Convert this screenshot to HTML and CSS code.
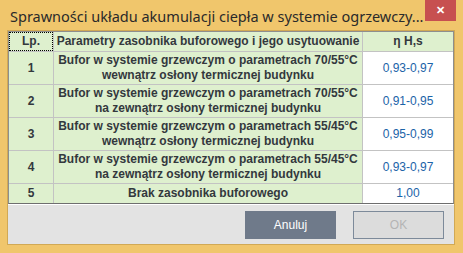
FILE: index.html
```html
<!DOCTYPE html>
<html>
<head>
    <title>Sprawności układu akumulacji ciepła</title>
    <meta charset="utf-8">
    <link rel="stylesheet" href="styles.css">
</head>
<body>
    <div class="window">
        <div class="titlebar">
            <span class="title">Sprawności układu akumulacji ciepła w systemie ogrzewczy...</span>
            <button class="close-btn" type="button">&#x2715;</button>
        </div>
        <div class="content">
            <div class="grid">
                <div class="cell head focus">Lp.</div>
                <div class="cell head">Parametry zasobnika buforowego i jego usytuowanie</div>
                <div class="cell head">η H,s</div>

                <div class="cell">1</div>
                <div class="cell">Bufor w systemie grzewczym o parametrach 70/55°C<br>wewnątrz osłony termicznej budynku</div>
                <div class="cell value">0,93-0,97</div>

                <div class="cell">2</div>
                <div class="cell">Bufor w systemie grzewczym o parametrach 70/55°C<br>na zewnątrz osłony termicznej budynku</div>
                <div class="cell value">0,91-0,95</div>

                <div class="cell">3</div>
                <div class="cell">Bufor w systemie grzewczym o parametrach 55/45°C<br>wewnątrz osłony termicznej budynku</div>
                <div class="cell value">0,95-0,99</div>

                <div class="cell">4</div>
                <div class="cell">Bufor w systemie grzewczym o parametrach 55/45°C<br>na zewnątrz osłony termicznej budynku</div>
                <div class="cell value">0,93-0,97</div>

                <div class="cell">5</div>
                <div class="cell">Brak zasobnika buforowego</div>
                <div class="cell value">1,00</div>
            </div>
            <div class="footer">
                <button class="btn btn-cancel" type="button">Anuluj</button>
                <button class="btn btn-ok" type="button" disabled>OK</button>
            </div>
        </div>
    </div>
</body>
</html>
```

FILE: styles.css
```css
body {
    margin: 0;
    font-family: "Liberation Sans", Arial, sans-serif;
}
.window {
    width: 463px;
    height: 253px;
    background: #f0c66c;
    box-sizing: border-box;
    display: flex;
    flex-direction: column;
}
.titlebar {
    height: 30px;
    display: flex;
    align-items: flex-start;
    justify-content: space-between;
}
.title {
    font-family: "Noto Sans", "Open Sans", sans-serif;
    font-size: 14.5px;
    color: #2a2a2a;
    padding: 6px 0 0 10px;
    line-height: 20px;
    white-space: nowrap;
}
.close-btn {
    width: 31px;
    height: 21px;
    margin-right: 7px;
    border: none;
    padding: 0;
    background: #c75050;
    color: #ffffff;
    font-size: 11px;
    font-weight: bold;
    line-height: 21px;
}
.content {
    margin: 0 8px 8px 7px;
    border: 1px solid #d1a955;
    flex: 1;
    background: #e3e3e3;
    display: flex;
    flex-direction: column;
}
.grid {
    display: grid;
    grid-template-columns: 44px 308px 90px;
    grid-template-rows: 19px 32px 32px 32px 32px 19px;
    gap: 1px;
    background: #c3c3c3;
    border: 1px solid #8e8e8e;
    border-bottom-color: #6e6e6e;
}
.cell {
    background: #def0ce;
    color: #33383d;
    font-size: 12px;
    font-weight: bold;
    line-height: 15px;
    text-align: center;
    display: flex;
    align-items: center;
    justify-content: center;
}
.cell.head {
    padding-bottom: 1px;
}
.cell.focus {
    outline: 1px dotted #000000;
    outline-offset: -1px;
}
.cell.value {
    background: #ffffff;
    color: #1b63a8;
    font-weight: normal;
}
.footer {
    flex: 1;
    border-top: 1px solid #ffffff;
    display: flex;
    justify-content: flex-end;
    align-items: flex-start;
    gap: 17px;
    padding: 6px 10px 0 0;
}
.btn {
    width: 91px;
    height: 28px;
    font-family: "Liberation Sans", Arial, sans-serif;
    font-size: 12px;
    padding: 0;
}
.btn-cancel {
    background: #6f7a8a;
    border: 1px solid #6f7a8a;
    color: #ffffff;
}
.btn-ok {
    background: #dcdcdc;
    border: 1px solid #7d8a9a;
    color: #b4b4b4;
}
```
